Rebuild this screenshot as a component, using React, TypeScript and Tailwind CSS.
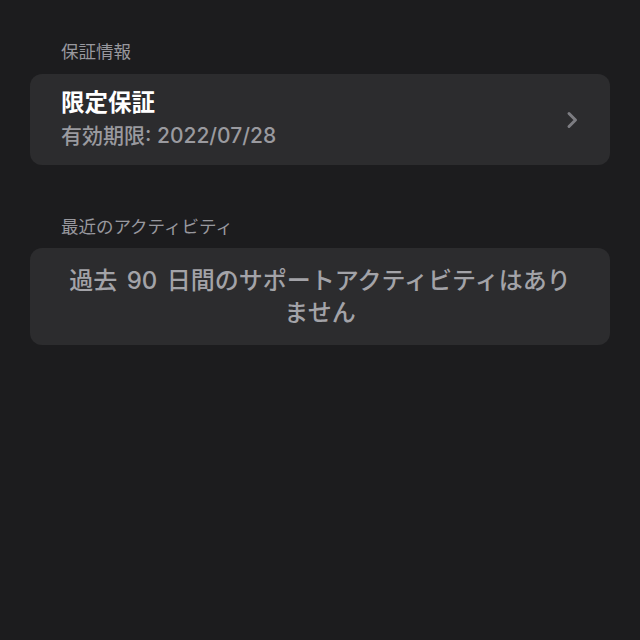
export default function App() {
  const font = { fontFamily: 'Inter, "Noto Sans CJK JP", sans-serif' };
  return (
    <div className="w-[640px] h-[640px] bg-[#1c1c1e] pt-[41px] px-[30px] overflow-hidden" style={font}>
      <div className="pl-[31px] text-[17.5px] leading-[22px] text-[#98989e]">保証情報</div>
      <div className="mt-[11px] rounded-[12px] bg-[#2c2c2e] pl-[31px] pr-[31px] pt-[15px] pb-[16px] flex items-center">
        <div className="flex-1 flex flex-col gap-[6px]">
          <div className="text-[23.5px] leading-[28px] font-semibold text-white">限定保証</div>
          <div className="text-[21px] leading-[26px] font-medium text-[#9a9a9f]">有効期限: 2022/07/28</div>
        </div>
        <svg width="13" height="18" viewBox="0 0 13 18" className="mt-[2px]">
          <path d="M3 2.5 L9.5 9 L3 15.5" fill="none" stroke="#7d7d82" strokeWidth="3" strokeLinecap="round" strokeLinejoin="round" />
        </svg>
      </div>
      <div className="mt-[51px] pl-[31px] text-[17.5px] leading-[22px] text-[#98989e]">最近のアクティビティ</div>
      <div className="mt-[10px] rounded-[12px] bg-[#2c2c2e] px-[10px] pt-[17px] pb-[16px] text-center text-[24px] leading-[32px] font-medium text-[#a3a3a8] [word-spacing:3px]">
        過去 90 日間のサポートアクティビティはあり<br />ません
      </div>
    </div>
  );
}
